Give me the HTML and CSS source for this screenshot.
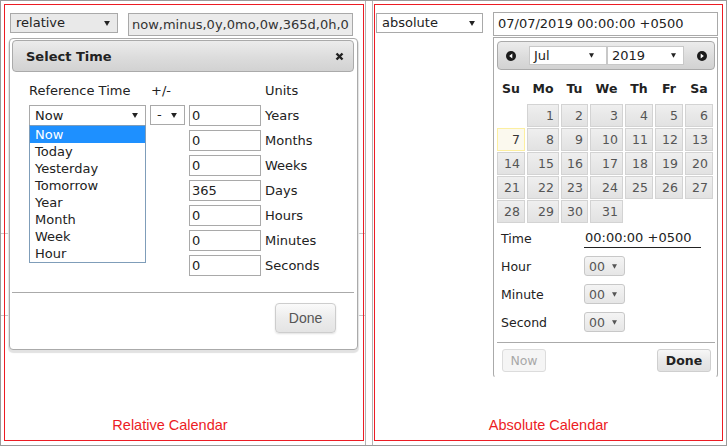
FILE: index.html
```html
<!DOCTYPE html>
<html>
<head>
<meta charset="utf-8">
<title>Calendars</title>
<link rel="stylesheet" href="styles.css">
</head>
<body>
<div class="frame">
  <div class="cell cell-left">
    <div class="panel">
      <div class="bar">
        <div class="sel sel-rel">relative<svg class="caret" viewBox="0 0 7 6"><path d="M0 0H7L3.5 6Z"/></svg></div>
        <div class="field field-rel">now,minus,0y,0mo,0w,365d,0h,0</div>
      </div>
      <div class="dialog">
        <div class="dlg-title">
          <span>Select Time</span>
          <svg class="close" viewBox="0 0 9 9"><path d="M1.5 1.5L7.5 7.5M7.5 1.5L1.5 7.5"/></svg>
        </div>
        <div class="dlg-body">
          <div class="grid">
            <div class="hd hd-ref">Reference Time</div>
            <div class="hd hd-pm">+/-</div>
            <div class="hd hd-units">Units</div>
            <div class="sel sel-ref">Now<svg class="caret" viewBox="0 0 7 6"><path d="M0 0H7L3.5 6Z"/></svg>
              <ul class="list">
                <li class="on">Now</li>
                <li>Today</li>
                <li>Yesterday</li>
                <li>Tomorrow</li>
                <li>Year</li>
                <li>Month</li>
                <li>Week</li>
                <li>Hour</li>
              </ul>
            </div>
            <div class="sel sel-pm">-<svg class="caret" viewBox="0 0 7 6"><path d="M0 0H7L3.5 6Z"/></svg></div>
            <div class="num r1">0</div><div class="unit r1">Years</div>
            <div class="num r2">0</div><div class="unit r2">Months</div>
            <div class="num r3">0</div><div class="unit r3">Weeks</div>
            <div class="num r4">365</div><div class="unit r4">Days</div>
            <div class="num r5">0</div><div class="unit r5">Hours</div>
            <div class="num r6">0</div><div class="unit r6">Minutes</div>
            <div class="num r7">0</div><div class="unit r7">Seconds</div>
          </div>
        </div>
        <div class="dlg-buttons"><button class="btn-done">Done</button></div>
      </div>
      <div class="caption caption-rel">Relative Calendar</div>
    </div>
  </div>

  <div class="cell cell-right">
    <div class="panel">
      <div class="bar bar-abs">
        <div class="sel sel-abs">absolute<svg class="caret" viewBox="0 0 7 6"><path d="M0 0H7L3.5 6Z"/></svg></div>
        <div class="abs-col">
          <div class="field field-abs">07/07/2019 00:00:00 +0500</div>
          <div class="dp">
            <div class="dp-head">
              <svg class="nav" viewBox="0 0 10 10"><circle cx="5" cy="5" r="5"/><path class="tri" d="M6.3 2.4L3.2 5L6.3 7.6Z"/></svg>
              <div class="dsel dsel-m">Jul<svg class="caret" viewBox="0 0 7 6"><path d="M0 0H7L3.5 6Z"/></svg></div>
              <div class="dsel dsel-y">2019<svg class="caret" viewBox="0 0 7 6"><path d="M0 0H7L3.5 6Z"/></svg></div>
              <svg class="nav nav-next" viewBox="0 0 10 10"><circle cx="5" cy="5" r="5"/><path class="tri" d="M3.7 2.4L6.8 5L3.7 7.6Z"/></svg>
            </div>
            <table class="cal">
              <colgroup>
                <col class="c1"><col class="c2"><col class="c3"><col class="c4"><col class="c5"><col class="c6"><col class="c7">
              </colgroup>
              <thead>
                <tr><th>Su</th><th>Mo</th><th>Tu</th><th>We</th><th>Th</th><th>Fr</th><th>Sa</th></tr>
              </thead>
              <tbody>
                <tr><td></td><td><span class="d">1</span></td><td><span class="d">2</span></td><td><span class="d">3</span></td><td><span class="d">4</span></td><td><span class="d">5</span></td><td><span class="d">6</span></td></tr>
                <tr><td><span class="d today">7</span></td><td><span class="d">8</span></td><td><span class="d">9</span></td><td><span class="d">10</span></td><td><span class="d">11</span></td><td><span class="d">12</span></td><td><span class="d">13</span></td></tr>
                <tr><td><span class="d">14</span></td><td><span class="d">15</span></td><td><span class="d">16</span></td><td><span class="d">17</span></td><td><span class="d">18</span></td><td><span class="d">19</span></td><td><span class="d">20</span></td></tr>
                <tr><td><span class="d">21</span></td><td><span class="d">22</span></td><td><span class="d">23</span></td><td><span class="d">24</span></td><td><span class="d">25</span></td><td><span class="d">26</span></td><td><span class="d">27</span></td></tr>
                <tr><td><span class="d">28</span></td><td><span class="d">29</span></td><td><span class="d">30</span></td><td><span class="d">31</span></td><td></td><td></td><td></td></tr>
              </tbody>
            </table>
            <div class="tgrid">
              <div class="tl">Time</div><div class="tv">00:00:00 +0500</div>
              <div class="tl">Hour</div><div class="tsel">00<svg class="caret" viewBox="0 0 7 6"><path d="M0 0H7L3.5 6Z"/></svg></div>
              <div class="tl">Minute</div><div class="tsel">00<svg class="caret" viewBox="0 0 7 6"><path d="M0 0H7L3.5 6Z"/></svg></div>
              <div class="tl">Second</div><div class="tsel">00<svg class="caret" viewBox="0 0 7 6"><path d="M0 0H7L3.5 6Z"/></svg></div>
            </div>
            <div class="dp-buttons">
              <button class="btn-now">Now</button>
              <button class="btn-dp-done">Done</button>
            </div>
          </div>
        </div>
      </div>
      <div class="caption">Absolute Calendar</div>
    </div>
  </div>
</div>
</body>
</html>
```

FILE: styles.css
```css
* { box-sizing: border-box; }

html, body {
  margin: 0;
  padding: 0;
  width: 727px;
  height: 446px;
  overflow: hidden;
  background: #fff;
}

body {
  font-family: "DejaVu Sans", Verdana, sans-serif;
  font-size: 13px;
  color: #222;
}

.frame {
  display: flex;
  width: 727px;
  height: 446px;
  border: 1px solid #9a9a9a;
}

.cell {
  position: relative;
  height: 444px;
}

.cell-left {
  width: 365px;
  padding: 3px 1px 4px 3px;
  border-right: 1px solid #b4b4b4;
}

.cell-left::before,
.cell-left::after {
  content: "";
  position: absolute;
  left: 0;
  right: 0;
  height: 1px;
  background: #c8c8c8;
}
.cell-left::before { top: 232px; }
.cell-left::after { top: 314px; }

.cell-right {
  width: 354px;
  margin-left: 6px;
  padding: 3px 3px 4px 1px;
  border-left: 1px solid #b4b4b4;
}

.panel {
  position: relative;
  height: 437px;
  border: 1px solid #ec1c24;
  display: flex;
  flex-direction: column;
  z-index: 1;
}

.bar {
  display: flex;
  align-items: flex-start;
  padding: 8px 0 0 5px;
}

.bar-abs {
  padding: 7px 0 0 1px;
}

/* select-like boxes */
.sel {
  display: flex;
  align-items: center;
  justify-content: space-between;
  height: 20px;
  border: 1px solid #a9a9a9;
  padding: 0 7px 0 5px;
  line-height: 18px;
  background: #fff;
}

.caret {
  width: 6px;
  height: 5px;
  fill: #222;
  flex: none;
}

.sel-rel {
  width: 108px;
  background: #e9e9e9;
}

.sel-abs {
  width: 107px;
  margin-top: 1px;
}

.field {
  height: 23px;
  border: 1px solid #a9a9a9;
  line-height: 21px;
  padding-left: 3px;
  white-space: nowrap;
  overflow: hidden;
}

.field-rel {
  width: 225px;
  margin-left: 10px;
  background: #ebebeb;
  color: #333;
}

/* dialog */
.dialog {
  position: relative;
  z-index: 2;
  width: 349px;
  height: 312px;
  margin: 2px 0 0 4px;
  padding: 1px 3px 0 2px;
  border: 1px solid #aaa;
  border-radius: 4px;
  background: #fff;
  box-shadow: 0 2px 1px 1px #e2e2e2;
}

.dlg-title {
  display: flex;
  align-items: center;
  justify-content: space-between;
  height: 32px;
  padding: 0 9px 0 13px;
  border: 1px solid #aaa;
  border-radius: 4px;
  background: linear-gradient(#ececec, #dcdcdc 55%, #d2d2d2);
  font-weight: bold;
  color: #222;
}

.close {
  width: 9px;
  height: 9px;
  stroke: #222;
  stroke-width: 2.4;
  fill: none;
}

.dlg-body {
  padding: 9px 0 0 17px;
}

.grid {
  display: grid;
  grid-template-columns: 117px 35px 72px auto;
  grid-template-rows: 20px repeat(7, 21px);
  column-gap: 4px;
  row-gap: 4px;
}

.hd {
  line-height: 20px;
  grid-row: 1;
}
.hd-ref { grid-column: 1; }
.hd-pm { grid-column: 2; padding-left: 1px; }
.hd-units { grid-column: 4; }

.sel-ref {
  grid-column: 1;
  grid-row: 2;
  height: 21px;
  position: relative;
}

.sel-pm {
  grid-column: 2;
  grid-row: 2;
  padding-left: 6px;
}

.list {
  position: absolute;
  top: 100%;
  left: -1px;
  width: 117px;
  margin: 0;
  padding: 0;
  list-style: none;
  border: 1px solid #7f9db9;
  background: #fff;
  z-index: 3;
}

.list li {
  height: 17px;
  line-height: 17px;
  padding-left: 5px;
  color: #222;
}

.list li.on {
  background: #1e90ff;
  color: #fff;
}

.num {
  grid-column: 3;
  border: 1px solid #a9a9a9;
  padding-left: 2px;
  line-height: 19px;
}

.unit {
  grid-column: 4;
  line-height: 21px;
}

.r1 { grid-row: 2; }
.r2 { grid-row: 3; }
.r3 { grid-row: 4; }
.r4 { grid-row: 5; }
.r5 { grid-row: 6; }
.r6 { grid-row: 7; }
.r7 { grid-row: 8; }

.dlg-buttons {
  margin-top: 16px;
  border-top: 1px solid #aaa;
  padding: 10px 18px 16px 0;
  display: flex;
  justify-content: flex-end;
}

.btn-done {
  width: 61px;
  height: 30px;
  border: 1px solid #cdcdcd;
  border-radius: 4px;
  background: linear-gradient(#fafafa, #ececec 50%, #e4e4e4);
  box-shadow: 0 1px 2px rgba(0, 0, 0, 0.12);
  font-family: "Liberation Sans", Arial, sans-serif;
  font-size: 14px;
  color: #555;
  padding: 0;
}

.caption {
  margin-top: auto;
  margin-bottom: 6px;
  text-align: center;
  font-family: "Liberation Sans", Arial, sans-serif;
  font-size: 14.5px;
  line-height: 17px;
  color: #ec1c24;
}

.caption-rel {
  padding-right: 28px;
}

/* absolute side */
.abs-col {
  width: 225px;
  margin-left: 10px;
}

.field-abs {
  height: 24px;
  line-height: 22px;
  padding-left: 4px;
  color: #222;
}

.dp {
  margin-top: 1px;
  width: 225px;
  height: 341px;
  border: 1px solid #aaa;
  border-bottom-color: transparent;
  border-radius: 0 0 4px 4px;
  padding: 3px 2px 0 3px;
  font-size: 12.5px;
}

.dp-head {
  display: flex;
  align-items: center;
  height: 29px;
  border: 1px solid #aaa;
  border-radius: 4px;
  background: linear-gradient(#ececec, #dcdcdc 55%, #d2d2d2);
}

.nav {
  width: 10px;
  height: 10px;
  margin-left: 8px;
  fill: #1a1a1a;
  flex: none;
}
.nav .tri { fill: #fff; }
.nav-next { margin-left: 13px; }

.dsel {
  display: flex;
  align-items: center;
  justify-content: space-between;
  height: 19px;
  border: 1px solid #c8c8c8;
  background: #fff;
  font-size: 13px;
  color: #222;
  padding-left: 4px;
}
.dsel .caret { width: 5px; height: 5px; }

.dsel-m {
  width: 78px;
  margin-left: 13px;
  padding-right: 12px;
}

.dsel-y {
  width: 77px;
  padding-right: 7px;
}

.cal {
  margin-top: 5px;
  border-collapse: separate;
  border-spacing: 0;
  table-layout: fixed;
  width: 218px;
}

.c1 { width: 30px; }
.c2 { width: 34px; }
.c3 { width: 29px; }
.c4 { width: 35px; }
.c5 { width: 30px; }
.c6 { width: 30px; }
.c7 { width: 30px; }

.cal th {
  height: 29px;
  padding: 1px 2px 4px 0;
  font-weight: bold;
  color: #222;
  text-align: center;
  vertical-align: middle;
}

.cal td {
  padding: 0 2px 1px 0;
  height: 24px;
}

.d {
  display: block;
  height: 23px;
  line-height: 21px;
  border: 1px solid #d3d3d3;
  background: linear-gradient(#efefef, #e8e8e8 50%, #e2e2e2);
  text-align: right;
  padding-right: 4px;
  color: #555;
}

.d.today {
  background: #fbf9ee;
  border-color: #fcefa1;
  color: #363636;
}

.tgrid {
  display: grid;
  grid-template-columns: 83px auto;
  grid-auto-rows: 20px;
  row-gap: 8px;
  margin-top: 4px;
  padding-left: 4px;
  align-items: center;
}

.tl {
  color: #222;
}

.tv {
  width: 117px;
  height: 20px;
  line-height: 19px;
  border-bottom: 1px solid #222;
  padding-left: 1px;
  font-size: 13px;
  color: #222;
}

.tsel {
  display: flex;
  align-items: center;
  justify-content: space-between;
  width: 41px;
  height: 20px;
  border: 1px solid #c8c8c8;
  border-radius: 3px;
  background: linear-gradient(#f4f4f4, #e6e6e6);
  padding: 0 7px 0 4px;
  font-size: 12.5px;
  color: #555;
}
.tsel .caret { width: 5px; height: 5px; fill: #555; }

.dp-buttons {
  margin-top: 10px;
  border-top: 1px solid #aaa;
  padding: 6px 4px 0 5px;
  display: flex;
  justify-content: space-between;
}

.btn-now,
.btn-dp-done {
  height: 23px;
  border-radius: 3px;
  padding: 0;
  font-family: "DejaVu Sans", Verdana, sans-serif;
  font-size: 12.5px;
}

.btn-now {
  width: 44px;
  border: 1px solid #dcdcdc;
  background: #f5f5f5;
  color: #a8a8a8;
}

.btn-dp-done {
  width: 54px;
  border: 1px solid #cfcfcf;
  background: linear-gradient(#f7f7f7, #e9e9e9 50%, #e1e1e1);
  font-weight: bold;
  color: #222;
}
```
